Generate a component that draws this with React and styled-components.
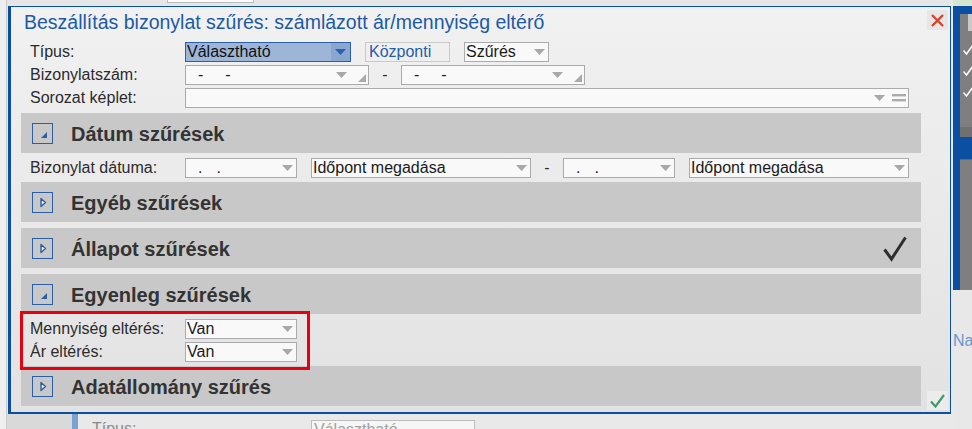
import styled, { createGlobalStyle } from 'styled-components'

const GlobalStyle = createGlobalStyle`
  html, body {
    margin: 0;
    padding: 0;
  }
  body {
    font-family: "Liberation Sans", Arial, sans-serif;
    background: #e6e6e6;
  }
`;

/* ---------- backdrop (the page behind the modal) ---------- */

const Screen = styled.div`
  position: relative;
  width: 972px;
  height: 429px;
  overflow: hidden;
  display: grid;
  grid-template-columns: 7px 1fr 21px;
  background: #e6e6e6;
`;

const LeftRail = styled.div`
  background: #efefef;
  border-right: 1px solid #c9c9c9;
`;

const BackMain = styled.div`
  display: flex;
  flex-direction: column;
  justify-content: space-between;
`;

const TopStrip = styled.div`
  height: 6px;
  display: flex;
  align-items: flex-start;
`;

const TopTab = styled.div`
  margin-left: 160px;
  width: 85px;
  height: 2px;
  background: #fbfbfb;
  border: 1px solid #bdbdbd;
  border-top: none;
`;

const BottomStrip = styled.div`
  height: 15px;
  display: flex;
  align-items: stretch;
`;

const BackSidebar = styled.div`
  width: 65px;
  background: #d9d9d9;
`;

const BackSidebarEdge = styled.div`
  width: 6px;
  background: #79a2d2;
`;

const BackForm = styled.div`
  flex: 1;
  display: flex;
  align-items: flex-start;
  background: #e9e9e9;
  padding-top: 6px;
  color: #8a8a8a;
  font-size: 16px;
  line-height: 18px;
`;

const BackLabel = styled.span`
  margin-left: 14px;
  width: 219px;
`;

const BackBox = styled.div`
  padding-left: 2px;
  width: 160px;
  height: 20px;
  border: 1px solid #bdbdbd;
  background: #f6f6f6;
  color: #a0a0a0;
`;

const RightPanel = styled.div`
  display: flex;
  flex-direction: column;
  background: #e8e8e8;
  border-left: 2px solid #e9e9e9;
`;

const GreenCap = styled.div`
  height: 6px;
  background: #d6e7cf;
`;

const BlueFrame = styled.div`
  height: 276px;
  background: #0b4fa3;
  padding: 8px 0 0 7px;
  display: flex;
  flex-direction: column;
`;

const GrayList = styled.div`
  background: #7f7f7f;
  height: 123px;
  display: flex;
  flex-direction: column;
  gap: 9px;
`;

const ListHeader = styled.div`
  margin-left: 8px;
  height: 17px;
  background: #c9c9c9;
  margin-bottom: 4px;
`;

const ListCheck = styled.svg`
  margin-left: 3px;
  display: block;
`;

const ListFoot = styled.div`
  height: 10px;
  background: #707070;
  margin-top: auto;
`;

const BlueBlock = styled.div`
  height: 22px;
  margin-left: -7px;
  background: #0b4fa3;
`;

const GrayList2 = styled.div`
  flex: 1;
  background: #7f7f7f;
  border-top: 1px solid #6a6a6a;
`;

const BackLink = styled.div`
  margin-top: 42px;
  color: #6b96cc;
  font-size: 16px;
  white-space: nowrap;
`;

/* ---------- modal dialog ---------- */

const Dialog = styled.div`
  position: absolute;
  left: 8px;
  top: 6px;
  width: 943px;
  height: 408px;
  box-sizing: border-box;
  border-style: solid;
  border-color: #0b4fa3;
  border-width: 1px 1px 2px 3px;
  background: linear-gradient(#f1f1f1, #e2e2e2);
  display: flex;
`;

const DialogMain = styled.div`
  width: 910px;
  display: flex;
  flex-direction: column;
`;

const Gutter = styled.div`
  flex: 1;
  display: flex;
  flex-direction: column;
  justify-content: space-between;
  align-items: flex-start;
  padding: 3px 2px 2px 6px;
`;

const CornerButton = styled.div`
  width: 21px;
  height: ${p => p.$h}px;
  background: ${p => p.$bg};
  display: flex;
  align-items: center;
  justify-content: center;
`;

const TitleBar = styled.div`
  height: 35px;
  padding-left: 13px;
`;

const Title = styled.h1`
  margin: 0;
  font-size: 19.5px;
  font-weight: normal;
  line-height: 30px;
  color: #1c5aa6;
  white-space: nowrap;
`;

const FormGrid = styled.div`
  display: grid;
  grid-template-columns: 155px auto;
  row-gap: 3px;
  padding-left: 19px;
  margin-bottom: 5px;
`;

const Label = styled.div`
  height: 20px;
  display: flex;
  align-items: center;
  font-size: 16px;
  color: #2b2b2b;
  white-space: nowrap;
`;

const Controls = styled.div`
  display: flex;
  align-items: center;
  gap: ${p => p.$gap ?? 14}px;
`;

const Field = styled.div`
  box-sizing: border-box;
  width: ${p => p.$w}px;
  height: 20px;
  display: flex;
  align-items: center;
  padding: 0 ${p => p.$pr ?? 3}px 0 ${p => p.$pl ?? 1}px;
  border: 1px solid ${p => p.$border || '#ababab'};
  background: ${p => p.$bg || '#f9f9f9'};
  color: ${p => p.$color || '#1a1a1a'};
  font-size: 16px;
  white-space: nowrap;
`;

const FieldText = styled.span`
  flex: 1;
  overflow: hidden;
`;

const Dash = styled.span`
  margin-left: ${p => p.$ml}px;
`;

const Sep = styled.span`
  width: 32px;
  text-align: center;
  font-size: 16px;
  color: #2b2b2b;
`;

const DropZone = styled.div`
  align-self: stretch;
  width: 19px;
  background: #8ba7cf;
  display: flex;
  align-items: center;
  justify-content: center;
  margin-right: -3px;
`;

const Grip = styled.svg`
  align-self: flex-end;
  margin: 0 0 2px 11px;
  display: block;
`;

const Sections = styled.div`
  padding-left: 10px;
  display: flex;
  flex-direction: column;
`;

const Section = styled.section`
  position: relative;
`;

const Bar = styled.div`
  height: 40px;
  width: 900px;
  background: #c8c8c8;
  display: flex;
  align-items: center;
  padding-left: 11px;
  padding-top: 1px;
  box-sizing: border-box;
`;

const Toggle = styled.svg`
  display: block;
  margin-right: 18px;
  flex-shrink: 0;
`;

const Heading = styled.h2`
  margin: 0;
  padding-top: 2px;
  flex: 1;
  font-size: 20px;
  font-weight: bold;
  color: #333333;
  white-space: nowrap;
`;

const DoneMark = styled.svg`
  display: block;
  margin-right: 14px;
`;

const Body = styled.div`
  position: relative;
  min-height: 6px;
  padding: ${p => (p.$open ? '5px 0 4px 9px' : '0')};
  display: grid;
  grid-template-columns: 155px auto;
  row-gap: 3px;
`;

const Highlight = styled.div`
  position: absolute;
  z-index: 2;
  left: -1px;
  top: -3px;
  width: 290px;
  height: 59px;
  box-sizing: border-box;
  border: 3px solid #e8000f;
  pointer-events: none;
`;

/* ---------- small drawings ---------- */

const Caret = ({ color = '#a8a8a8' }) => (
  <svg width="11" height="6" viewBox="0 0 11 6">
    <path d="M0 0H11L5.5 6Z" fill={color} />
  </svg>
);

const CornerGrip = () => (
  <Grip width="8" height="8" viewBox="0 0 8 8">
    <path d="M8 0V8H0Z" fill="#ababab" />
  </Grip>
);

const EqualsIcon = styled.svg`
  margin-left: 7px;
  display: block;
`;

const Equals = () => (
  <EqualsIcon width="14" height="8" viewBox="0 0 14 8">
    <rect x="0" y="0" width="14" height="2.4" fill="#ababab" />
    <rect x="0" y="5" width="14" height="2.4" fill="#ababab" />
  </EqualsIcon>
);

const ToggleIcon = ({ open }) => (
  <Toggle width="21" height="21" viewBox="0 0 21 21">
    <rect x="0.5" y="0.5" width="20" height="20" fill="none" stroke="#2a5fa8" />
    {open ? (
      <path d="M9 15H15V9Z" fill="#2a5fa8" />
    ) : (
      <path d="M9 6.5L13.5 10.5L9 14.5Z" fill="#e3eaf4" stroke="#2a5fa8" strokeWidth="1.4" strokeLinejoin="round" />
    )}
  </Toggle>
);

const WhiteCheck = () => (
  <ListCheck width="10" height="12" viewBox="0 0 10 12">
    <path d="M0.5 6.5L3.5 10L10 1" fill="none" stroke="#ffffff" strokeWidth="1.5" />
  </ListCheck>
);

const Select = ({ w, value, caret }) => (
  <Field $w={w}>
    <FieldText>{value}</FieldText>
    <Caret color={caret} />
  </Field>
);

const DateBox = () => (
  <Field $w={112}>
    <FieldText><Dash $ml={11}>.</Dash><Dash $ml={14}>.</Dash></FieldText>
    <Caret />
  </Field>
);

const NumberBox = () => (
  <Field $w={184} $pr={2}>
    <FieldText><Dash $ml={11}>-</Dash><Dash $ml={22}>-</Dash></FieldText>
    <Caret />
    <CornerGrip />
  </Field>
);

/* ---------- data ---------- */

const sections = [
  {
    title: 'Dátum szűrések',
    open: true,
    rows: [
      {
        label: 'Bizonylat dátuma:',
        controls: (
          <>
            <DateBox />
            <Select w={220} value="Időpont megadása" />
            <Sep>-</Sep>
            <DateBox />
            <Select w={220} value="Időpont megadása" />
          </>
        ),
      },
    ],
  },
  { title: 'Egyéb szűrések', open: false },
  { title: 'Állapot szűrések', open: false, done: true },
  {
    title: 'Egyenleg szűrések',
    open: true,
    highlight: true,
    rows: [
      { label: 'Mennyiség eltérés:', controls: <Select w={112} value="Van" /> },
      { label: 'Ár eltérés:', controls: <Select w={112} value="Van" /> },
    ],
  },
  { title: 'Adatállomány szűrés', open: false },
];

const DateControls = styled(Controls)`
  & > ${Sep} {
    margin: 0 -14px;
  }
`;

export default function App() {
  return (
    <>
      <GlobalStyle />
      <Screen>
        <LeftRail />
        <BackMain>
          <TopStrip>
            <TopTab />
          </TopStrip>
          <BottomStrip>
            <BackSidebar />
            <BackSidebarEdge />
            <BackForm>
              <BackLabel>Típus:</BackLabel>
              <BackBox>Választható</BackBox>
            </BackForm>
          </BottomStrip>
        </BackMain>
        <RightPanel>
          <GreenCap />
          <BlueFrame>
            <GrayList>
              <ListHeader />
              <WhiteCheck />
              <WhiteCheck />
              <WhiteCheck />
              <ListFoot />
            </GrayList>
            <BlueBlock />
            <GrayList2 />
          </BlueFrame>
          <BackLink>Na</BackLink>
        </RightPanel>

        <Dialog>
          <DialogMain>
            <TitleBar>
              <Title>Beszállítás bizonylat szűrés: számlázott ár/mennyiség eltérő</Title>
            </TitleBar>

            <FormGrid>
              <Label>Típus:</Label>
              <Controls>
                <Field $w={166} $bg="#9db5d7" $border="#2b5fa8" $color="#111">
                  <FieldText>Választható</FieldText>
                  <DropZone>
                    <Caret color="#2a62b0" />
                  </DropZone>
                </Field>
                <Field $w={85} $bg="#efefef" $border="#c9c9c9" $color="#1f5fa8" $pl={3}>
                  <FieldText>Központi</FieldText>
                </Field>
                <Select w={85} value="Szűrés" />
              </Controls>

              <Label>Bizonylatszám:</Label>
              <Controls $gap={0}>
                <NumberBox />
                <Sep>-</Sep>
                <NumberBox />
              </Controls>

              <Label>Sorozat képlet:</Label>
              <Controls>
                <Field $w={724} $pr={2}>
                  <FieldText />
                  <Caret />
                  <Equals />
                </Field>
              </Controls>
            </FormGrid>

            <Sections>
              {sections.map(s => (
                <Section key={s.title}>
                  <Bar>
                    <ToggleIcon open={s.open} />
                    <Heading>{s.title}</Heading>
                    {s.done && (
                      <DoneMark width="24" height="26" viewBox="0 0 24 26">
                        <path d="M1.5 13.5L8.5 23L22.5 1.5" fill="none" stroke="#2e2e2e" strokeWidth="3" />
                      </DoneMark>
                    )}
                  </Bar>
                  <Body $open={s.open}>
                    {s.rows &&
                      s.rows.map(r => [
                        <Label key={r.label + '-l'}>{r.label}</Label>,
                        <DateControls key={r.label + '-c'}>{r.controls}</DateControls>,
                      ])}
                    {s.highlight && <Highlight />}
                  </Body>
                </Section>
              ))}
            </Sections>
          </DialogMain>

          <Gutter>
            <CornerButton $h={20} $bg="#e6e6e6">
              <svg width="13" height="13" viewBox="0 0 13 13">
                <path d="M1 1L12 12M12 1L1 12" stroke="#d4452d" strokeWidth="2.4" />
              </svg>
            </CornerButton>
            <CornerButton $h={19} $bg="#ececec">
              <svg width="15" height="14" viewBox="0 0 15 14">
                <path d="M1 7.5L5.5 12.5L14 1" fill="none" stroke="#3e9c6f" strokeWidth="2.2" />
              </svg>
            </CornerButton>
          </Gutter>
        </Dialog>
      </Screen>
    </>
  );
}
